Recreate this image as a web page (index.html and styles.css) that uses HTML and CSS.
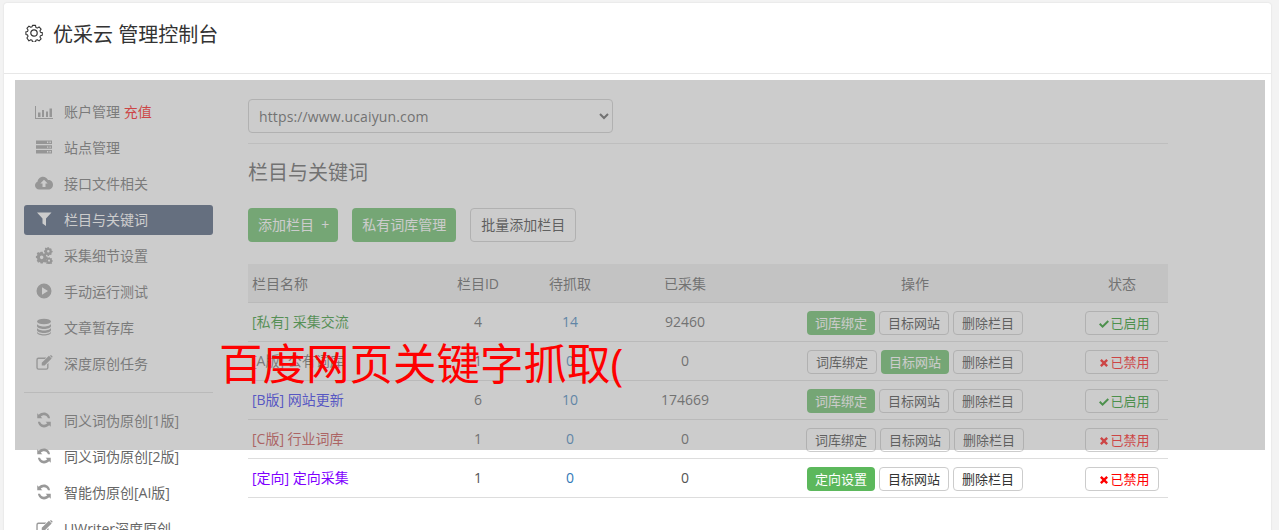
FILE: index.html
```html
<!DOCTYPE html>
<html lang="zh-CN">
<head>
    <meta charset="UTF-8">
    <meta name="viewport" content="width=device-width, initial-scale=1.0">
    <title>优采云 管理控制台</title>
    <link rel="stylesheet" href="styles.css">
</head>
<body>
    <svg class="sprite" aria-hidden="true">
        <symbol id="i-chart" viewBox="0 0 18 18"><path d="M0 4h1v12h17v1H0zM3 10.500h2.500V15H3zM7 8h2v7H7zM11 9.500h2V15h-2zM14.500 6.500H17V15h-2.500z"/></symbol>
        <symbol id="i-server" viewBox="0 0 18 18"><path fill-rule="evenodd" d="M1 2.500h16v3.500H1zM12 3.600v1.300h1.300V3.600zM14.500 3.600v1.300h1.300V3.600zM1 7.300h16v3.500H1zM12 8.400v1.300h1.300V8.400zM14.500 8.400v1.300h1.300V8.400zM1 12h16v3.500H1zM12 13.100v1.300h1.300v-1.300zM14.500 13.100v1.300h1.300v-1.300z"/></symbol>
        <symbol id="i-cloud" viewBox="0 0 18 18"><path fill-rule="evenodd" d="M4.200 15.500C1.900 15.500 0 13.800 0 11.500c0-1.700 1-3.100 2.500-3.700C2.800 5 5.200 2.800 8 2.800c2.200 0 4.100 1.300 5 3.200 2.800-.2 5 1.900 5 4.700 0 2.700-2.100 4.800-4.700 4.800zM9 5.800 5.300 9.600h2.200v3.400h3V9.600h2.200z"/></symbol>
        <symbol id="i-filter" viewBox="0 0 18 18"><path d="M2 2.500h14.500l-5.500 6V16l-3.500-2.500v-5z"/></symbol>
        <symbol id="i-cogs" viewBox="-1 -1 20 20"><path fill-rule="evenodd" d="M5.200 5.500h2.400l.3 1.500 1.100.5 1.300-.8 1.600 1.600-.8 1.300.5 1.100 1.500.3v2.400l-1.500.3-.5 1.100.8 1.300-1.600 1.500-1.300-.7-1.100.4-.3 1.100H5.200l-.3-1.100-1.100-.4-1.300.7L.9 15.100l.8-1.300-.5-1.100-1.200-.3V10l1.200-.3.5-1.100-.8-1.300 1.600-1.600 1.300.8 1.100-.5zM6.400 9.600a2 2 0 1 0 0 4 2 2 0 0 0 0-4z"/><path fill-rule="evenodd" d="M13 .5h1.600l.2 1 1 .4.800-.5 1.100 1.100-.5.800.4 1 1 .2v1.500l-1 .2-.4 1 .5.800-1.100 1.100-.8-.5-1 .4-.2 1H13l-.2-1-1-.4-.8.500-1.100-1.100.5-.8-.4-1-1-.2V3.900l1-.2.400-1-.5-.8L10.500.8l.8.500 1-.4zM13.800 3.400a1.400 1.400 0 1 0 0 2.800 1.400 1.400 0 0 0 0-2.800z"/><path fill-rule="evenodd" d="M14 11.500h1.300l.2.900.9.300.7-.4.900.9-.4.700.3.900.900.2v1.300l-.9.200-.3.900.4.700-.9.900-.7-.4-.9.300-.2.900H14l-.2-.9-.9-.3-.7.4-.9-.9.4-.7-.3-.9-.9-.2v-1.300l.9-.2.3-.9-.4-.7.9-.9.7.4.9-.3zM14.600 14a1.200 1.200 0 1 0 0 2.400 1.200 1.200 0 0 0 0-2.400z"/></symbol>
        <symbol id="i-play" viewBox="0 0 18 18"><path fill-rule="evenodd" d="M9 1.500a7.500 7.500 0 1 1 0 15 7.500 7.500 0 0 1 0-15zM7 5.300v7.400L13 9z"/></symbol>
        <symbol id="i-db" viewBox="0 0 18 18"><ellipse cx="9" cy="3.500" rx="7" ry="2.800"/><path d="M2 5.500c0 2 3.500 3 7 3s7-1 7-3V8c0 2-3.500 3-7 3S2 10 2 8zM2 9.500c0 2 3.500 3 7 3s7-1 7-3V12c0 2-3.500 3-7 3s-7-1-7-3zM2 13.300c0 2 3.500 3 7 3s7-1 7-3v1.200c0 2-3.500 3-7 3s-7-1-7-3z"/></symbol>
        <symbol id="i-edit" viewBox="-1 -1 20 20"><path d="M3 3h8.500L10 4.500H3A1 1 0 0 0 2 5.500v8.500a1 1 0 0 0 1 1h8.500a1 1 0 0 0 1-1v-3.500L14 9v5.200a2.400 2.400 0 0 1-2.400 2.300H3a2.400 2.400 0 0 1-2.500-2.300V5.500A2.400 2.400 0 0 1 3 3z"/><path d="M14.500 1 17.500 4l-7.800 7.800H6.500V8.600zM15.500 1l.8-.5c.4-.2.800-.2 1.100.1l.9.900c.3.300.3.700 0 1.100l-.6.700z"/></symbol>
        <symbol id="i-refresh" viewBox="-1 -1 20 20"><path d="M15.700 7h-2.300C12.700 5 11 3.700 9 3.700c-1.400 0-2.700.6-3.600 1.600L7.200 7H1.500V1.400l1.700 1.700C4.700 1.700 6.800.8 9 .8c3.400 0 6.300 2.600 6.700 6.200zM2.300 11h2.300c.7 2 2.400 3.300 4.400 3.300 1.400 0 2.700-.6 3.600-1.600L10.800 11h5.700v5.600l-1.700-1.700c-1.500 1.400-3.600 2.300-5.800 2.300-3.400 0-6.300-2.600-6.700-6.200z"/></symbol>
        <symbol id="i-check" viewBox="0 0 12 12"><path d="M0 6.500 1.700 4.800 4.300 7.400 10.300 1.500 12 3.200 4.300 10.800z"/></symbol>
        <symbol id="i-times" viewBox="0 0 12 12"><path d="M3.200 1.200 6 4l2.800-2.800 2 2L8 6l2.800 2.800-2 2L6 8l-2.800 2.800-2-2L4 6 1.200 3.200z"/></symbol>
    </svg>

    <div class="panel">
        <div class="panel-head">
            <svg class="gear" viewBox="0 0 18 18" fill="none" stroke="#333" stroke-width="1.200" stroke-linejoin="round">
                <path d="M7.300 1h3.400l.4 2.300 1.500.7 2-1.300 2.300 2.400-1.300 2 .6 1.500 2 .4v3l-2 .4-.6 1.500 1.300 2-2.300 2.300-2-1.300-1.500.7-.4 1.900H7.300l-.4-1.900-1.500-.7-2 1.300L1.100 15l1.300-2-.6-1.500-1.800-.4v-3l1.800-.4.600-1.500-1.300-2 2.300-2.400 2 1.300 1.500-.7z" transform="translate(.9 .5) scale(.9)"/>
                <circle cx="9" cy="9" r="3.200"/>
            </svg>
            <h3>优采云 管理控制台</h3>
        </div>

        <div class="layout">
            <ul class="side">
                <li><svg class="ico"><use href="#i-chart"/></svg>账户管理 <span class="recharge">充值</span></li>
                <li><svg class="ico"><use href="#i-server"/></svg>站点管理</li>
                <li><svg class="ico"><use href="#i-cloud"/></svg>接口文件相关</li>
                <li class="active"><svg class="ico"><use href="#i-filter"/></svg>栏目与关键词</li>
                <li><svg class="ico"><use href="#i-cogs"/></svg>采集细节设置</li>
                <li><svg class="ico"><use href="#i-play"/></svg>手动运行测试</li>
                <li><svg class="ico"><use href="#i-db"/></svg>文章暂存库</li>
                <li><svg class="ico"><use href="#i-edit"/></svg>深度原创任务</li>
                <li class="sep"></li>
                <li><svg class="ico"><use href="#i-refresh"/></svg>同义词伪原创[1版]</li>
                <li><svg class="ico"><use href="#i-refresh"/></svg>同义词伪原创[2版]</li>
                <li><svg class="ico"><use href="#i-refresh"/></svg>智能伪原创[AI版]</li>
                <li><svg class="ico"><use href="#i-edit"/></svg>UWriter深度原创</li>
            </ul>

            <div class="main">
                <select class="site">
                    <option>https://www.ucaiyun.com</option>
                </select>
                <h4>栏目与关键词</h4>
                <div class="tools">
                    <a class="btn green add">添加栏目 &nbsp;+</a>
                    <a class="btn green">私有词库管理</a>
                    <a class="btn">批量添加栏目</a>
                </div>

                <table>
                    <thead>
                        <tr>
                            <th class="name">栏目名称</th>
                            <th>栏目ID</th>
                            <th>待抓取</th>
                            <th>已采集</th>
                            <th>操作</th>
                            <th>状态</th>
                        </tr>
                    </thead>
                    <tbody>
                        <tr>
                            <td class="name c-green">[私有] 采集交流</td>
                            <td>4</td>
                            <td class="num">14</td>
                            <td>92460</td>
                            <td><div class="ops"><a class="sm green">词库绑定</a><a class="sm">目标网站</a><a class="sm">删除栏目</a></div></td>
                            <td><div class="ops"><a class="sm state on"><svg class="mark"><use href="#i-check"/></svg>已启用</a></div></td>
                        </tr>
                        <tr>
                            <td class="name c-gray">[A版] 公有词库</td>
                            <td>1</td>
                            <td class="num">0</td>
                            <td>0</td>
                            <td><div class="ops"><a class="sm">词库绑定</a><a class="sm green">目标网站</a><a class="sm">删除栏目</a></div></td>
                            <td><div class="ops"><a class="sm state off"><svg class="mark"><use href="#i-times"/></svg>已禁用</a></div></td>
                        </tr>
                        <tr>
                            <td class="name c-blue">[B版] 网站更新</td>
                            <td>6</td>
                            <td class="num">10</td>
                            <td>174669</td>
                            <td><div class="ops"><a class="sm green">词库绑定</a><a class="sm">目标网站</a><a class="sm">删除栏目</a></div></td>
                            <td><div class="ops"><a class="sm state on"><svg class="mark"><use href="#i-check"/></svg>已启用</a></div></td>
                        </tr>
                        <tr>
                            <td class="name c-brown">[C版] 行业词库</td>
                            <td>1</td>
                            <td class="num">0</td>
                            <td>0</td>
                            <td><div class="ops"><a class="sm">词库绑定</a><a class="sm">目标网站</a><a class="sm">删除栏目</a></div></td>
                            <td><div class="ops"><a class="sm state off"><svg class="mark"><use href="#i-times"/></svg>已禁用</a></div></td>
                        </tr>
                        <tr>
                            <td class="name c-purple">[定向] 定向采集</td>
                            <td>1</td>
                            <td class="num">0</td>
                            <td>0</td>
                            <td><div class="ops"><a class="sm green">定向设置</a><a class="sm">目标网站</a><a class="sm">删除栏目</a></div></td>
                            <td><div class="ops"><a class="sm state off"><svg class="mark"><use href="#i-times"/></svg>已禁用</a></div></td>
                        </tr>
                    </tbody>
                </table>
            </div>
        </div>

        <div class="shade">
            <p class="shade-text">百度网页关键字抓取(</p>
        </div>
    </div>
</body>
</html>
```

FILE: styles.css
```css
html, body {
    height: 100%;
    overflow: hidden;
}
body {
    margin: 0;
    padding: 3px 8px 0 4px;
    box-sizing: border-box;
    background-color: #f3f3f3;
    font-family: "Open Sans", "Noto Sans CJK SC", sans-serif;
    font-size: 14px;
    color: #333;
}
.sprite {
    display: none;
}
.panel {
    position: relative;
    background-color: #fff;
    border-radius: 3px;
    box-shadow: 0 0 2px rgba(0, 0, 0, 0.12);
    height: 640px;
}
.panel-head {
    display: flex;
    align-items: center;
    height: 70px;
    padding: 0 21px;
    border-bottom: 1px solid #e7e7e7;
}
.gear {
    width: 18px;
    height: 18px;
    margin: -11px 10px 0 0;
}
h3 {
    margin: -6px 0 0 0;
    font-size: 20px;
    font-weight: 400;
    line-height: 28px;
}
.layout {
    display: flex;
    gap: 35px;
    padding: 23px 0 0 20px;
}
.side {
    list-style: none;
    margin: 0;
    padding: 0;
    width: 189px;
    flex: none;
}
.side li {
    display: flex;
    align-items: center;
    height: 30px;
    padding-bottom: 2px;
    box-sizing: border-box;
    margin-bottom: 6px;
    border-radius: 3px;
    color: #666;
    white-space: pre;
}
.ico {
    width: 18px;
    height: 18px;
    margin: 0 11px;
    fill: #999;
    flex: none;
}
.side li.active {
    background-color: #3d506f;
    color: #fff;
}
.side li.active .ico {
    fill: #fff;
}
.side li.sep {
    height: 1px;
    padding: 0;
    margin: 13px 0;
    border-radius: 0;
    background-color: #ddd;
}
.recharge {
    color: #f00;
}
.main {
    width: 920px;
    flex: none;
    padding-top: 2px;
}
.site {
    display: block;
    width: 365px;
    height: 34px;
    padding: 0 6px;
    background-color: #fff;
    border: 1px solid #ccc;
    border-radius: 4px;
    font-family: inherit;
    font-size: 14px;
    letter-spacing: 0.13px;
    color: #555;
}
h4 {
    margin: 10px 0 0 0;
    padding-top: 16px;
    border-top: 1px solid #e4e4e4;
    font-size: 20px;
    font-weight: 400;
    line-height: 26px;
    color: #555;
}
.tools {
    display: flex;
    gap: 14px;
    margin-top: 22px;
}
.btn {
    display: block;
    height: 34px;
    line-height: 32px;
    padding: 0 10px;
    box-sizing: border-box;
    background-color: #fff;
    border: 1px solid #ccc;
    border-radius: 4px;
    white-space: pre;
}
.btn.green, .sm.green {
    background-color: #5cb85c;
    border: none;
    color: #fff;
}
.btn.green {
    line-height: 34px;
}
.btn.add {
    padding-right: 9px;
}
table {
    width: 920px;
    margin-top: 22px;
    border-collapse: collapse;
    table-layout: fixed;
}
th {
    height: 38px;
    padding: 0;
    background-color: #eee;
    border-bottom: 1px solid #ddd;
    font-size: 14px;
    font-weight: 400;
    color: #555;
    text-align: center;
}
th:nth-child(1) { width: 180px; }
th:nth-child(2) { width: 92px; }
th:nth-child(3) { width: 92px; }
th:nth-child(4) { width: 138px; }
th:nth-child(5) { width: 322px; }
td {
    height: 39px;
    padding: 0 0 2px 0;
    box-sizing: border-box;
    border-bottom: 1px solid #ddd;
    text-align: center;
    color: #555;
}
th.name, td.name {
    text-align: left;
    padding-left: 4px;
}
td.num {
    color: #337ab7;
}
.c-green { color: #1f8f1f; }
.c-gray { color: #666; }
.c-blue { color: #2222ee; }
.c-brown { color: #c23b3b; }
.c-purple { color: #7f00ff; }
.ops {
    display: flex;
    justify-content: center;
    gap: 4px;
    margin-top: 3px;
}
.sm {
    display: inline-block;
    height: 24px;
    line-height: 22px;
    padding: 0 8px;
    box-sizing: border-box;
    background-color: #fff;
    border: 1px solid #ccc;
    border-radius: 4px;
    font-size: 13px;
    color: #333;
    white-space: nowrap;
}
.sm.green {
    line-height: 24px;
}
.sm.state {
    padding: 0 8px 0 13px;
}
.sm.on {
    color: #0f8f0f;
}
.sm.off {
    color: #f00;
}
.mark {
    width: 10px;
    height: 10px;
    margin-right: 1px;
    vertical-align: -1px;
    fill: currentColor;
}
.shade {
    position: absolute;
    left: 11px;
    top: 77px;
    width: 1250px;
    height: 370px;
    background-color: rgba(147, 147, 147, 0.47);
}
.shade-text {
    position: absolute;
    left: 204px;
    top: 252px;
    margin: 0;
    font-size: 43.5px;
    line-height: 64px;
    color: #f00;
    white-space: nowrap;
}
```
